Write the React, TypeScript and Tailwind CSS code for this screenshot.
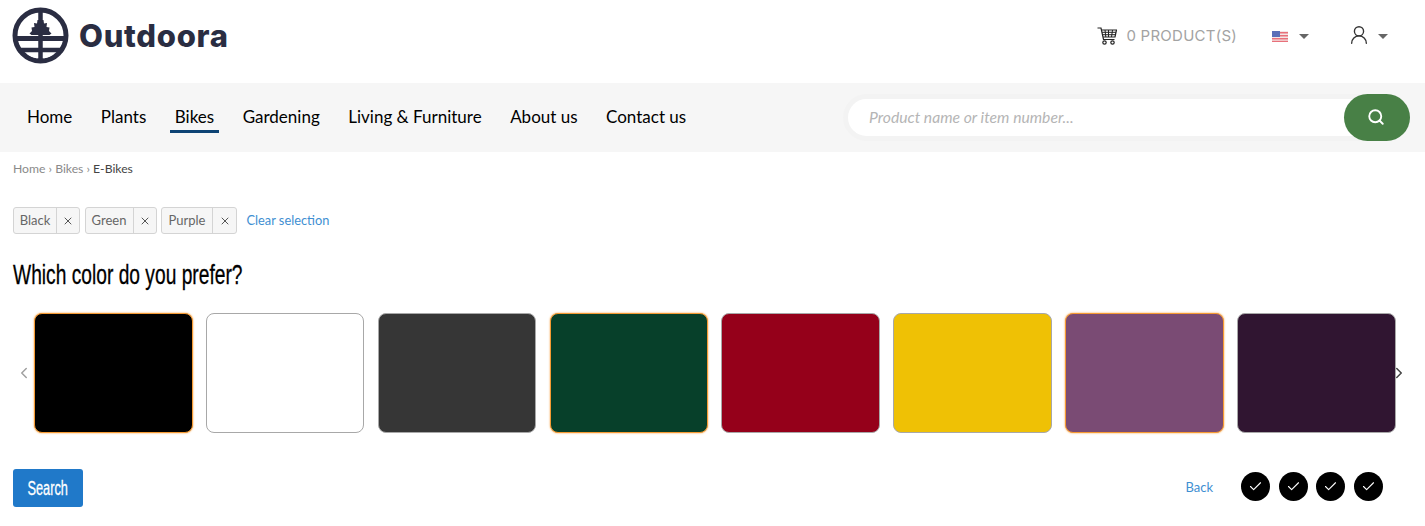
import React from "react";
import { ChevronLeft, ChevronRight, Search, X, Check, UserRound } from "lucide-react";

const navItems = ["Home", "Plants", "Bikes", "Gardening", "Living & Furniture", "About us", "Contact us"];

const chips = [
  { label: "Black", w: "w-[67px]", labelW: "w-[43px]" },
  { label: "Green", w: "w-[72px]", labelW: "w-[48px]" },
  { label: "Purple", w: "w-[76px]", labelW: "w-[51px]" },
];

const colors = [
  { id: "black", bg: "bg-[#000000]", selected: true },
  { id: "white", bg: "bg-[#ffffff]", selected: false },
  { id: "grey", bg: "bg-[#363636]", selected: false },
  { id: "green", bg: "bg-[#07402a]", selected: true },
  { id: "red", bg: "bg-[#95001a]", selected: false },
  { id: "yellow", bg: "bg-[#efc105]", selected: false },
  { id: "purple", bg: "bg-[#7a4b74]", selected: true },
  { id: "aubergine", bg: "bg-[#301531]", selected: false },
];

function Logo() {
  return (
    <svg width="58" height="58" viewBox="0 0 58 58" fill="none" stroke="#2a2d42" className="-ml-[1px]">
      <circle cx="28.500" cy="28.500" r="25.500" strokeWidth="5" />
      <path d="M28.500 3v51" strokeWidth="4.500" />
      <path d="M4 31.500h49" strokeWidth="5" />
      <path d="M6 43h45" strokeWidth="4.500" />
      <path d="M25.500 13h6l.5 3.500 3-.5-.5 4 3 .5-.5 3.500 2.500 2.500-2 1.500H19.500l-2-1.500 2.500-2.500-.5-3.500 3-.5-.5-4 3 .5z" fill="#2a2d42" stroke="none" />
      <path d="M25.500 46.500H14.500Q19 50.500 25.500 51.500zM31.500 46.500H42.500Q38 50.500 31.500 51.500z" fill="#fff" stroke="none" />
    </svg>
  );
}

function CartIcon() {
  return (
    <svg width="20" height="20" viewBox="0 0 20 20" fill="none" stroke="#222" strokeWidth="1.200">
      <path d="M0.500 2h3.500l2.500 11.500h11" />
      <path d="M4.500 4h15l-1.500 7H6" />
      <path d="M5 6.300h14M5.500 8.700h13M8 4l.8 7M11.500 4v7M15.500 4l-1 7" strokeWidth="1" />
      <circle cx="7.500" cy="16.500" r="1.700" />
      <circle cx="15.500" cy="16.500" r="1.700" />
    </svg>
  );
}

function Flag() {
  return (
    <svg width="16" height="11" viewBox="0 0 16 11">
      <rect width="16" height="11" fill="#f3e6e6" />
      <path d="M0 1h16v1.500H0zM0 4h16v1.500H0zM0 7h16v1.500H0zM0 9.800h16V11H0z" fill="#e8707a" />
      <rect width="8" height="6" fill="#5a6fb8" />
    </svg>
  );
}

function Caret() {
  return <div className="w-0 h-0 border-x-[5px] border-x-transparent border-t-[5px] border-t-[#666]" />;
}

export default function App() {
  return (
    <div className="w-[1425px] h-[526px] overflow-hidden bg-white font-['Lato',sans-serif]">
      <header className="h-[83px] flex items-center justify-between pl-[13px] pr-[37px] pb-[12px]">
        <div className="flex items-center gap-[9px]">
          <Logo />
          <span className="font-['Inter',sans-serif] font-extrabold text-[31px] leading-none text-[#2a2d42] tracking-[0.7px]">
            Outdoora
          </span>
        </div>
        <div className="flex items-center pt-[1px]">
          <CartIcon />
          <span className="ml-[9px] font-['Inter',sans-serif] text-[15px] tracking-[0.25px] text-[#a3a3a3]">0 PRODUCT(S)</span>
          <div className="ml-[35px]"><Flag /></div>
          <div className="ml-[11px]"><Caret /></div>
          <UserRound className="ml-[39px] -mt-[2px] text-[#333]" size={22} strokeWidth={1.500} />
          <div className="ml-[8px]"><Caret /></div>
        </div>
      </header>

      <nav className="h-[69px] bg-[#f6f6f6] flex items-center justify-between pl-[27px] pr-[15px]">
        <ul className="flex gap-[28.500px] -mt-[1px]">
          {navItems.map((item) => (
            <li
              key={item}
              className={
                item === "Bikes"
                  ? "relative text-[17px] leading-[28px] text-black after:absolute after:-left-[5px] after:-right-[5px] after:-bottom-[2px] after:h-[3px] after:bg-[#0d4374]"
                  : "text-[17px] leading-[28px] text-black"
              }
            >
              {item}
            </li>
          ))}
        </ul>
        <div className="relative w-[567px] h-[47px] flex items-center">
          <div className="w-[540px] h-[47px] rounded-full bg-white border-[5px] border-[#f3f3f3] flex items-center pl-[21px]">
            <span className="italic text-[15.700px] text-[#b5b5b5]">Product name or item number...</span>
          </div>
          <button className="absolute right-0 top-0 w-[66px] h-[47px] rounded-[24px] bg-[#488046] flex items-center justify-center">
            <Search className="text-white -mt-[2px] -ml-[2px]" size={18} strokeWidth={2.500} />
          </button>
        </div>
      </nav>

      <main className="px-[13px]">
        <div className="pt-[9px] h-[55px] text-[12.200px] leading-[16px] text-[#8a8a8a]">
          Home › Bikes › <span className="text-[#444]">E-Bikes</span>
        </div>

        <div className="flex items-center gap-[4.500px] h-[27px]">
          {chips.map((c) => (
            <div key={c.label} className={`flex h-[27px] rounded-[3px] border border-[#d4d4d4] bg-[#f6f6f6] text-[13px] text-[#666] ${c.w}`}>
              <span className={`flex items-center justify-center border-r border-[#d4d4d4] ${c.labelW}`}>{c.label}</span>
              <span className="flex-1 flex items-center justify-center">
                <X size={12} strokeWidth={2} className="text-[#555]" />
              </span>
            </div>
          ))}
          <span className="ml-[5px] text-[12.800px] text-[#3f8fd2]">Clear selection</span>
        </div>

        <h1 className="mt-[25px] h-[32px] origin-left scale-x-[0.686] whitespace-nowrap font-['Liberation_Sans',sans-serif] text-[28px] leading-[32px] text-black [-webkit-text-stroke:0.3px_black]">
          Which color do you prefer?
        </h1>

        <div className="mt-[22px] flex items-center h-[120px]">
          <ChevronLeft size={18} strokeWidth={2} className="ml-[2px] text-[#a0a0a0] shrink-0" />
          <div className="ml-[1px] flex gap-[13.360px]">
            {colors.map((c) => (
              <div
                key={c.id}
                className={
                  c.selected
                    ? `w-[158.500px] h-[120px] rounded-[8px] border border-[#f59a33] shadow-[0_0_2px_#f59a33] ${c.bg}`
                    : `w-[158.500px] h-[120px] rounded-[8px] border border-[#a8a8a8] ${c.bg}`
                }
              />
            ))}
          </div>
          <ChevronRight size={18} strokeWidth={2} className="-ml-[6px] text-[#444] shrink-0" />
        </div>

        <div className="mt-[36px] flex items-center justify-between">
          <button className="w-[70px] h-[38px] rounded-[3px] bg-[#2079c9] flex items-center justify-center">
            <span className="scale-x-[0.64] font-['Liberation_Sans',sans-serif] text-[20px] text-white [-webkit-text-stroke:0.3px_white]">Search</span>
          </button>
          <div className="flex items-center pr-[29px] -mt-[4px]">
            <span className="mr-[28px] mt-[4px] text-[13px] text-[#3f8fd2]">Back</span>
            <div className="flex gap-[8.670px]">
              {[0, 1, 2, 3].map((i) => (
                <span key={i} className="w-[29px] h-[29px] rounded-full bg-black flex items-center justify-center">
                  <Check size={15} strokeWidth={1.750} className="text-white" />
                </span>
              ))}
            </div>
          </div>
        </div>
      </main>
    </div>
  );
}
